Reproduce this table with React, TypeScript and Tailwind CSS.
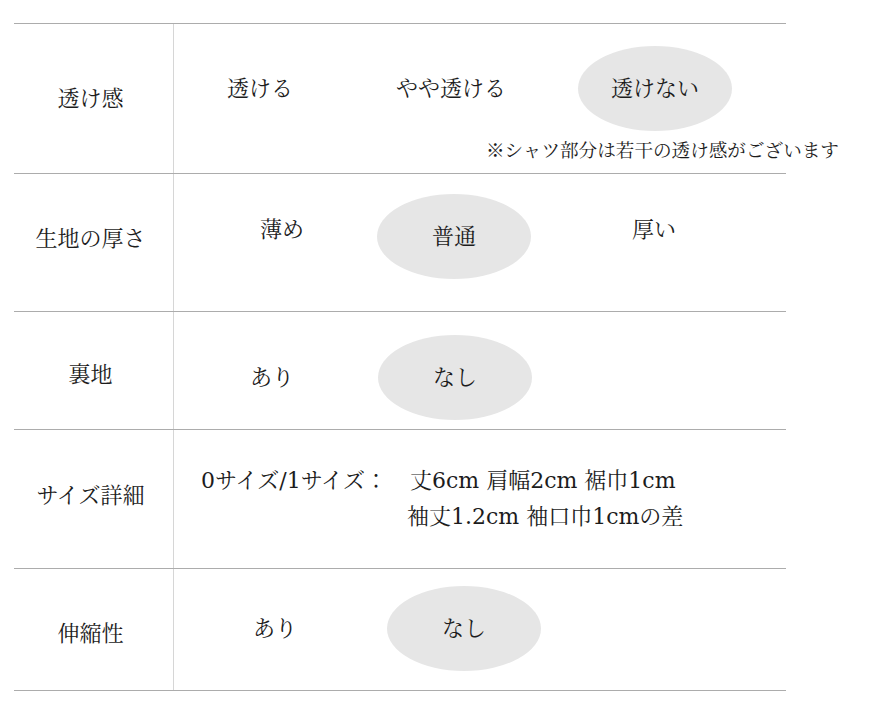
// Fabric spec table: transparency, thickness, lining, size details, stretch.
// The selected value in each row sits inside a grey ellipse.

const FONT = "font-['Liberation_Serif','Noto_Serif_CJK_JP','Noto_Sans_CJK_JP',serif]"
const SIZE_FONT = "font-['DejaVu_Serif','Noto_Serif_CJK_JP','Noto_Sans_CJK_JP',serif]"

function Option({ label, selected, lift }: { label: string; selected?: boolean; lift?: boolean }) {
  return (
    <div
      className={
        "w-[154px] h-[85px] shrink-0 flex items-center justify-center " +
        (selected ? "rounded-[50%] bg-[#e6e6e6]" : "") +
        (lift ? " pb-[14px]" : "")
      }
    >
      {label}
    </div>
  )
}

function Row({ label, height, labelShift, children }: { label: string; height: string; labelShift: string; children: React.ReactNode }) {
  return (
    <div className={"flex border-b border-[#acacac] " + height}>
      <div className={"w-[160px] shrink-0 border-r border-[#d6d6d6] flex items-center justify-center pr-[6px] " + labelShift}>
        {label}
      </div>
      <div className="flex-1">{children}</div>
    </div>
  )
}

export default function App() {
  return (
    <div className={"w-[876px] h-[704px] bg-white text-[#1c1c1c] text-[22px] leading-[30px] pt-[23px] pl-[14px] " + FONT}>
      <div className="w-[772px] border-t border-[#acacac]">
        <Row label="透け感" height="h-[150px]" labelShift="pt-[1px]">
          <div className="flex pt-[22px] pl-[9px] gap-[37px]">
            <Option label="透ける" />
            <div className="flex gap-[50px]">
              <Option label="やや透ける" />
              <Option label="透けない" selected />
            </div>
          </div>
          <p className="ml-[312px] mt-[8px] whitespace-nowrap text-[18.6px] leading-[24px]">
            ※シャツ部分は若干の透け感がございます
          </p>
        </Row>

        <Row label="生地の厚さ" height="h-[138px]" labelShift="pb-[8px]">
          <div className="flex pt-[20px] pl-[31px]">
            <Option label="薄め" lift />
            <div className="ml-[18px]">
              <Option label="普通" selected />
            </div>
            <div className="ml-[46px]">
              <Option label="厚い" lift />
            </div>
          </div>
        </Row>

        <Row label="裏地" height="h-[118px]" labelShift="pt-[9px]">
          <div className="flex pt-[23px] pl-[21px] gap-[29px]">
            <Option label="あり" />
            <Option label="なし" selected />
          </div>
        </Row>

        <Row label="サイズ詳細" height="h-[139px]" labelShift="pb-[6px]">
          <div className={"flex pt-[33px] pl-[27px] leading-[36px] whitespace-nowrap " + SIZE_FONT}>
            <span className="w-[209px] shrink-0">0サイズ/1サイズ：</span>
            <div className="flex flex-col">
              <span>丈6cm 肩幅2cm 裾巾1cm</span>
              <span className="-ml-[3px]">袖丈1.2cm 袖口巾1cmの差</span>
            </div>
          </div>
        </Row>

        <Row label="伸縮性" height="h-[122px]" labelShift="pt-[9px]">
          <div className="flex pt-[17px] pl-[24px] gap-[35px]">
            <Option label="あり" />
            <Option label="なし" selected />
          </div>
        </Row>
      </div>
    </div>
  )
}
